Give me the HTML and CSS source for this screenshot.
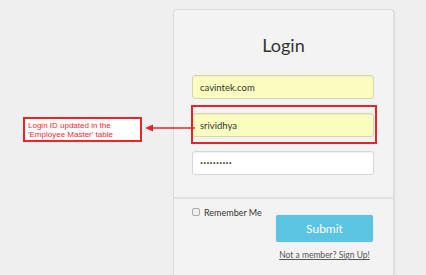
FILE: index.html
```html
<!DOCTYPE html>
<html lang="en">
<head>
    <meta charset="UTF-8">
    <title>Login</title>
    <link rel="stylesheet" href="styles.css">
</head>
<body>
    <div class="login-card">
        <h1>Login</h1>
        <div class="login-fields">
            <div class="field">cavintek.com</div>
            <div class="field">srividhya</div>
            <div class="field field-pass">••••••••••</div>
        </div>
        <div class="login-footer">
            <label class="remember"><span class="check"></span>Remember Me</label>
            <div class="actions">
                <button class="submit-btn">Submit</button>
                <a href="#" class="signup">Not a member? Sign Up!</a>
            </div>
        </div>
    </div>

    <!-- annotation overlay -->
    <div class="highlight"></div>
    <div class="note">Login ID updated in the<br>'Employee Master' table</div>
    <svg class="arrow" width="50" height="10" viewBox="0 0 50 10">
        <line x1="5" y1="5" x2="50" y2="5" stroke="#e0262b" stroke-width="1.5"/>
        <polygon points="0,5 8,1.5 8,8.5" fill="#e0262b"/>
    </svg>
</body>
</html>
```

FILE: styles.css
```css
:root {
    --bg-color: #efefef;
    --card-bg: #f3f3f3;
    --border-color: #dcdcdc;
    --text-color: #333;
    --autofill: #fbfdc0;
    --accent: #5bc4e2;
    --red: #e0262b;
}
* { box-sizing: border-box; }
body {
    margin: 0;
    background: var(--bg-color);
    font-family: Lato, "Open Sans", sans-serif;
    color: var(--text-color);
    height: 275px;
    overflow: hidden;
}
.login-card {
    margin: 9px 0 0 173px;
    width: 221px;
    height: 266px;
    background: var(--card-bg);
    border: 1px solid var(--border-color);
    border-bottom: none;
    border-radius: 4px 4px 0 0;
    box-shadow: 1px 1px 2px rgba(0,0,0,0.08);
}
h1 {
    margin: 24px 0 0 0;
    text-align: center;
    font-weight: 400;
    font-size: 18px;
    line-height: 22px;
    color: #333;
}
.login-fields {
    display: flex;
    flex-direction: column;
    gap: 14px;
    padding: 19px 19px 22px 18px;
    border-bottom: 2px solid #e2e2e2;
}
.field {
    height: 24px;
    padding: 0 7px;
    display: flex;
    align-items: center;
    font-size: 9.5px;
    background: var(--autofill);
    border: 1px solid #d6d7b0;
    border-radius: 3px;
    box-shadow: inset 0 1px 1px rgba(0,0,0,0.06);
}
.field-pass {
    background: #fff;
    border-color: #d6d6d6;
    font-size: 5px;
    letter-spacing: 0.3px;
    color: #555;
}
.login-footer {
    display: flex;
    justify-content: space-between;
    padding: 7px 20px 0 18px;
}
.remember {
    display: flex;
    align-items: center;
    gap: 4px;
    font-size: 9px;
    height: 12px;
    color: #333;
}
.check {
    width: 8px;
    height: 8px;
    border: 1px solid #aaa;
    border-radius: 2px;
    background: #eee;
}
.actions {
    display: flex;
    flex-direction: column;
    align-items: center;
    margin-top: 9px;
    width: 97px;
}
.submit-btn {
    width: 97px;
    height: 27px;
    border: none;
    border-radius: 2px;
    background: var(--accent);
    color: #fff;
    font-family: inherit;
    font-size: 12px;
    box-shadow: 0 0 2px rgba(0,0,0,0.1);
}
.signup {
    margin-top: 8px;
    font-size: 8.5px;
    color: #555;
    text-decoration: underline;
}
/* annotation overlay */
.highlight {
    position: absolute;
    left: 191px; top: 105px;
    width: 186px; height: 39px;
    border: 2px solid var(--red);
}
.note {
    position: absolute;
    left: 23px; top: 117px;
    width: 119px; height: 25px;
    padding: 2px 3px;
    background: #fff;
    border: 2px solid #f0222a;
    font-family: "Liberation Sans", Arial, sans-serif;
    font-size: 8px;
    line-height: 9px;
    color: #ee2b33;
}
.arrow {
    position: absolute;
    left: 145px; top: 123px;
}
```
